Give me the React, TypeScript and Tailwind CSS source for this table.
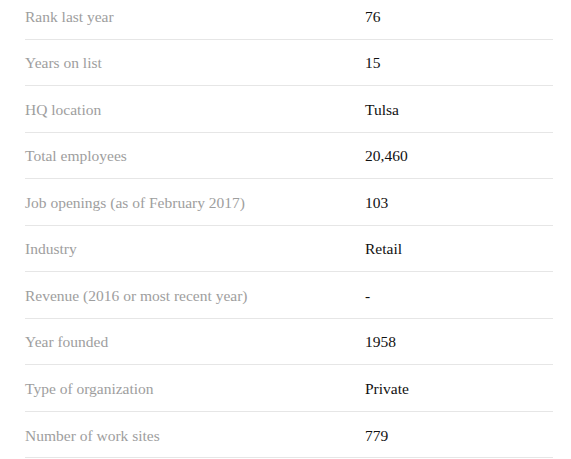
const rows: [string, string][] = [
  ["Rank last year", "76"],
  ["Years on list", "15"],
  ["HQ location", "Tulsa"],
  ["Total employees", "20,460"],
  ["Job openings (as of February 2017)", "103"],
  ["Industry", "Retail"],
  ["Revenue (2016 or most recent year)", "-"],
  ["Year founded", "1958"],
  ["Type of organization", "Private"],
  ["Number of work sites", "779"],
];

const App = () => {
  return (
    <div className="w-[571px] h-[459px] overflow-hidden bg-white">
      <div className="ml-[25px] w-[528px] mt-[-7px] [font-family:'Liberation_Serif',serif] text-[15.5px]">
        {rows.map(([label, value]) => (
          <div
            key={label}
            className="flex items-center h-[46.56px] pt-[1px] border-b border-[#e6e6e6]"
          >
            <div className="w-[340px] text-[#9e9e9e]">{label}</div>
            <div className="text-[#111111]">{value}</div>
          </div>
        ))}
      </div>
    </div>
  );
};

export default App;
